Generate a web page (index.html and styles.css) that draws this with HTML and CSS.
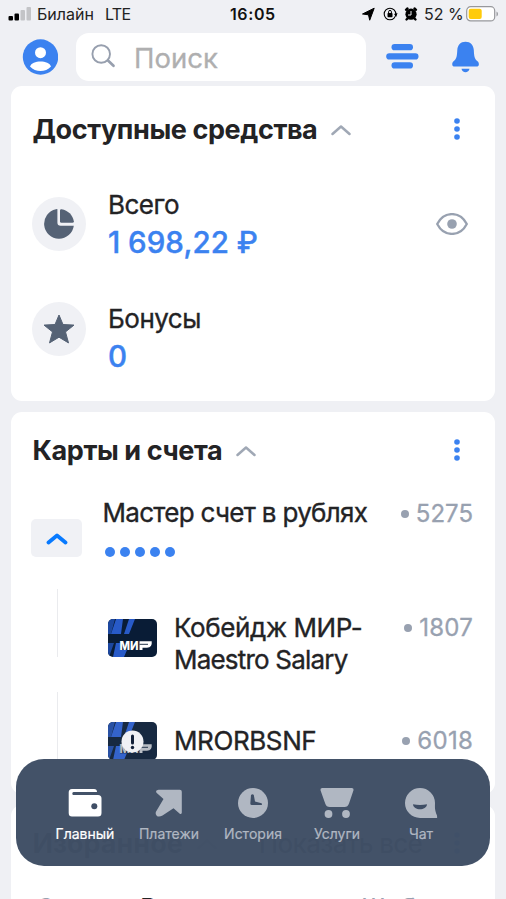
FILE: index.html
```html
<!DOCTYPE html>
<html lang="ru">
<head>
<meta charset="utf-8">
<meta name="viewport" content="width=device-width">
<title>Главный</title>
<link rel="stylesheet" href="styles.css">
</head>
<body>
<div class="screen">
  <div class="status">
    <svg class="signal" width="24" height="16" viewBox="0 0 24 16"><rect x=".5" y="10" width="4.500" height="4.500" rx="1"/><rect x="6.500" y="7.500" width="4.500" height="7" rx="1"/><g fill="#c3c4c7"><rect x="12.500" y="4" width="4.500" height="10.500" rx="1"/><rect x="18.500" y="1" width="4.500" height="13.500" rx="1"/></g></svg>
    <span class="carrier">Билайн</span>
    <span class="network">LTE</span>
    <span class="clock">16:05</span>
    <svg class="status-icons" width="56" height="16" viewBox="0 0 56 16"><path d="M12.200 2.200 7.700 14.200 6.500 8.800.5 8Z" stroke="#000" stroke-linejoin="round"/><circle cx="28" cy="8" r="5.800" fill="none" stroke="#000" stroke-width="1.100"/><path d="m32 8 2.300 2.800L35.500 7z"/><rect x="25.500" y="7" width="5" height="4.200" rx=".7"/><path d="M26.600 7.400V5.800a1.400 1.400 0 0 1 2.800 0v1.600" fill="none" stroke="#000"/><circle cx="49" cy="8.200" r="5.600"/><path d="m44 3.800 1.500-1.300M54 3.800l-1.500-1.300M45.500 12.500l-1 1M52.500 12.500l1 1" stroke="#000" stroke-width="2.400" stroke-linecap="round"/><path d="M49 5v4h-3" fill="none" stroke="#eff0f4"/></svg>
    <span class="percent">52 %</span>
    <svg class="battery" width="34" height="16" viewBox="0 0 34 16"><rect x=".7" y=".7" width="28" height="14.200" rx="4" fill="#fff" stroke="#97989c" stroke-width="1.200"/><rect x="2.700" y="2.800" width="13" height="10.200" rx="2" fill="#ffcb0a"/><path d="M30.500 5.500c2 1 2 4 0 5z" fill="#97989c"/></svg>
  </div>

  <header class="top">
    <svg class="avatar" width="36" height="36" viewBox="0 0 36 36"><circle cx="18.500" cy="18" r="17.700" fill="#3b82f0"/><circle cx="18.500" cy="13.700" r="5.500" fill="#fff"/><path d="M8 27.500C10 20.700 27 20.700 29 27.500 23.500 33.500 13.500 33.500 8 27.500Z" fill="#fff"/></svg>
    <div class="search">
      <svg width="25" height="25" viewBox="0 0 25 25" fill="none" stroke="#979fae" stroke-linecap="round"><circle cx="10.200" cy="10" r="8.800" stroke-width="1.900"/><path d="m17 16.500 5.500 5.200" stroke-width="2.700"/></svg>
      <span>Поиск</span>
    </div>
    <svg class="menu" width="33" height="25" viewBox="0 0 33 25" fill="#3b82f0"><rect x="5.500" width="21.500" height="6.300" rx="3.100"/><rect x=".2" y="9.200" width="32.300" height="6.300" rx="3.100"/><rect x="5.500" y="18.300" width="21.500" height="6.300" rx="3.100"/></svg>
    <svg class="bell" width="28" height="32" viewBox="0 0 28 32" fill="#3b82f0"><path d="M13.500.8C8.500.8 5.600 4.200 5.300 9 5 14.500 4.800 18 1.300 20.500-.2 21.700-.2 25.500 1.800 25.500h23.500c2 0 2-3.800.5-5C22.300 18 22.100 14.500 21.800 9 21.500 4.200 18.500.8 13.500.8ZM9.500 27.800h8c-.5 4.500-7.500 4.500-8 0Z"/></svg>
  </header>

  <main>
    <section class="card funds">
      <div class="heading"><h2 class="h-funds">Доступные средства</h2>
        <svg class="chev" width="20" height="12" viewBox="0 0 20 12"><path d="m1.500 10 8.500-7.500 8.500 7.500"/></svg>
        <svg class="dots" width="6" height="22" viewBox="0 0 6 22"><circle cx="3" cy="3" r="2.800"/><circle cx="3" cy="11" r="2.800"/><circle cx="3" cy="19" r="2.800"/></svg>
      </div>
      <div class="fund">
        <div class="disc"><svg width="32" height="32" viewBox="0 0 32 32" fill="#556275"><path d="M14.400 1.200V14.500Q14.400 17.700 17.700 17.700H30.800A14.900 14.900 0 1 1 12.900 1.200Q14.400 1 14.400 1.200Z"/><path d="M17 2.400Q17 1 18.600 1.200C25 2.300 29.800 7 30.800 13.200Q31 14.800 29.300 14.800H18.400Q17 14.800 17 13.400Z"/></svg></div>
        <div class="fund-text total"><div class="label">Всего</div><div class="amount">1 698,22 ₽</div></div>
        <svg class="eye" width="32" height="22" viewBox="0 0 32 22"><path d="M1.200 11C8-2.200 24-2.200 30.800 11 24 24.200 8 24.200 1.200 11Z" fill="none" stroke="#98a1b0" stroke-width="2.300" stroke-linejoin="round"/><circle cx="16" cy="11" r="4.800" fill="#98a1b0"/></svg>
      </div>
      <div class="fund">
        <div class="disc"><svg width="32" height="32" viewBox="0 0 32 32"><path d="m16 2 4 9.500 11 .6-8.500 6.800 3 11L16 24.200l-9.500 5.700 3-11-8.500-6.800 11-.6Z" fill="#556275" stroke="#556275" stroke-linejoin="round"/></svg></div>
        <div class="fund-text bonus"><div class="label">Бонусы</div><div class="amount">0</div></div>
      </div>
    </section>

    <section class="card accounts">
      <div class="heading"><h2 class="h-cards">Карты и счета</h2>
        <svg class="chev" width="20" height="12" viewBox="0 0 20 12"><path d="m1.500 10 8.500-7.500 8.500 7.500"/></svg>
        <svg class="dots" width="6" height="22" viewBox="0 0 6 22"><circle cx="3" cy="3" r="2.800"/><circle cx="3" cy="11" r="2.800"/><circle cx="3" cy="19" r="2.800"/></svg>
      </div>
      <div class="account">
        <div class="toggle"><svg width="22" height="13" viewBox="0 0 22 13"><path d="m2.500 10.500 8.500-7 8.500 7" fill="none" stroke="#087aff" stroke-width="3.800" stroke-linecap="round" stroke-linejoin="round"/></svg></div>
        <div class="account-text"><div class="label l-master">Мастер счет в рублях</div><div class="mask"><i></i><i></i><i></i><i></i><i></i></div></div>
        <div class="number"><i></i><span>5275</span></div>
      </div>
      <div class="bankcard">
        <div class="branch"></div>
        <svg class="plastic" width="49" height="38" viewBox="0 0 49 38"><use href="#mir"/></svg>
        <div class="label name"><div class="l-cob">Кобейдж МИР-</div><div class="l-mae">Maestro Salary</div></div>
        <div class="number n-wide"><i></i><span>1807</span></div>
      </div>
      <div class="bankcard second">
        <div class="branch"></div>
        <svg class="plastic" width="49" height="38" viewBox="0 0 49 38"><use href="#mir"/><rect width="49" height="38" rx="5" fill="#fff" opacity=".06"/><path d="M12 22h32v10H12z" fill="#14233f" opacity=".3"/><circle cx="24.500" cy="19.500" r="11" fill="#f0f1f5"/><path d="M24.500 14v7" stroke="#122039" stroke-width="3" stroke-linecap="round"/><circle cx="24.500" cy="25.500" r="1.700" fill="#122039"/></svg>
        <div class="label name"><div class="l-mro">MRORBSNF</div></div>
        <div class="number n-wide"><i></i><span>6018</span></div>
      </div>
    </section>

    <section class="card favorites">
      <div class="heading"><h2 class="h-fav">Избранное</h2>
        <svg class="chev" width="20" height="12" viewBox="0 0 20 12"><path d="m1.500 10 8.500-7.500 8.500 7.500"/></svg>
        <span class="all">Показать все</span>
        <svg class="dots" width="6" height="22" viewBox="0 0 6 22"><circle cx="3" cy="3" r="2.800"/><circle cx="3" cy="11" r="2.800"/><circle cx="3" cy="19" r="2.800"/></svg>
      </div>
      <div class="fav-row"><span class="muted">С</span><span>В</span><span class="muted">Шаб</span></div>
    </section>
  </main>

  <nav class="tabs">
    <a class="tab active"><svg width="34" height="32" viewBox="0 0 34 32"><path d="M4 2H26q3 0 3 3H5.500q-1.200 0-1.200 1.500T5.500 8H30q3.500 0 3.500 3.500V26q0 3.500-3.500 3.500H4Q.7 29.500.7 26V5.500Q.7 2 4 2Z"/><circle cx="26.300" cy="19.300" r="3" class="hole"/></svg><span>Главный</span></a>
    <a class="tab"><svg width="34" height="32" viewBox="0 0 34 32"><path d="M6.500 2.800H27.800q2 0 2 2v21q-.6 2-2.300.6l-6-5.200-11 7.300q-4 2.200-6-.1-1.800-2.200.2-4.800L11.500 12 4.500 5.800q-1.500-2.400 2-3Z"/></svg><span>Платежи</span></a>
    <a class="tab"><svg width="34" height="32" viewBox="0 0 34 32"><circle cx="17" cy="16" r="15"/><path d="M15 8q1.600-1.300 2.800 0l1.200 6.500 6.500 1.700q1 1 0 1.800H15.800q-1.500 0-1.500-1.500Z" class="hole"/></svg><span>История</span></a>
    <a class="tab"><svg width="34" height="32" viewBox="0 0 34 32"><path d="M2 1H32q2 .3 1.500 2.300L29 16.500q-1.200 3.500-4.500 3.500H9.800q-3.500 0-4.600-3.500L.5 3.300Q0 1.300 2 1Z"/><circle cx="8.500" cy="27" r="3.900"/><circle cx="26" cy="27" r="3.900"/></svg><span>Услуги</span></a>
    <a class="tab"><svg width="34" height="32" viewBox="0 0 34 32"><path d="M16 1A15 15 0 0 1 31 16c0 4-.5 6.500 2 12.500l.2 2Q33 31 32.200 31H16A15 15 0 0 1 16 1Z"/><path d="M9 17.300q7 1.500 14 0c-.5 6.700-13.500 6.700-14 0Z" class="hole"/></svg><span>Чат</span></a>
  </nav>
</div>
<svg width="0" height="0" class="defs"><defs>
  <clipPath id="round"><rect width="49" height="38" rx="5"/></clipPath>
  <g id="mir" clip-path="url(#round)"><rect width="49" height="38" fill="#091c36"/><path d="M0 0h7L3 15H0ZM0 24h6L1 38H0Z" fill="#1c479f"/><path d="M8 0h7l-2 15H3ZM21 0h6l-6 15h-5ZM8 24h4v7h7l-3 7H5Z" fill="#285ac8"/><text x="11.500" y="31" textLength="19" lengthAdjust="spacingAndGlyphs" class="mir-text">МИ</text><path d="M31.500 22.300H43.700q.8 6.400-4.700 6.400H34.500V31h-3Z" fill="#fff"/><path d="M31.500 25.300h8.500" stroke="#091c36" stroke-width=".9"/></g>
</defs></svg>
</body>
</html>
```
FILE: styles.css
```css
* { box-sizing: border-box; }
body { margin: 0; background: #eff0f4; font-family: Inter, "Liberation Sans", sans-serif; color: #232325; }
svg { display: block; flex: none; }
.screen { position: relative; width: 506px; height: 899px; overflow: hidden; }
.status { display: flex; align-items: center; height: 28px; padding-left: 8px; font-size: 16px; color: #222; white-space: nowrap; }
.signal { margin: -1px 5px 0 0; }
.carrier { width: 68px; }
.network { width: 125px; letter-spacing: -.7px; }
.clock { width: 132px; font-weight: 600; color: #111; letter-spacing: .6px; }
.percent { margin-left: 6px; width: 42px; }
.battery { margin-top: -1px; }
.top { display: flex; align-items: center; height: 57px; margin-bottom: 1px; padding-left: 22px; }
.search { display: flex; align-items: center; width: 290px; height: 48px; margin-left: 18px; padding-left: 15px; border-radius: 13px; background: #fff; color: #afafb0; font-size: 27.5px; }
.search span { margin: 2px 0 0 18px; -webkit-text-stroke: .3px; }
.menu { margin-left: 20px; }
.bell { margin-left: 33px; }
main { display: flex; flex-direction: column; gap: 11px; padding: 0 11px; }
.card { flex: none; width: 484px; border-radius: 11px; background: #fff; padding: 0 22px; }
.funds { height: 315px; }
.accounts { height: 382px; }
.favorites { height: 150px; }
.heading { display: flex; align-items: center; height: 86px; padding-right: 13px; white-space: nowrap; }
.accounts .heading, .favorites .heading { height: 75px; margin-bottom: 10px; }
.heading .dots { margin-left: auto; fill: #3b82f0; }
h2 { margin: 2px 14px 0 -.5px; font-size: 27px; font-weight: 700; line-height: 32px; letter-spacing: -.4px; }
.h-fav { letter-spacing: 0; }
.chev { margin-top: 2px; }
.chev path { fill: none; stroke: #a0a8b5; stroke-width: 2.5; stroke-linecap: round; stroke-linejoin: round; }
.fund { display: flex; align-items: center; height: 104px; }
.fund + .fund { height: 106px; }
.disc { display: flex; align-items: center; justify-content: center; width: 54px; height: 54px; margin-left: -1px; border-radius: 50%; background: #f0f1f5; }
.fund-text { margin-left: 22px; }
.total { margin-top: 5px; }
.bonus { margin-top: 22px; }
.label { font-size: 26px; line-height: 32px; letter-spacing: -.5px; -webkit-text-stroke: .35px; white-space: nowrap; }
.amount { font-size: 29.5px; font-weight: 500; line-height: 43px; color: #3b82f0; letter-spacing: .15px; word-spacing: -.5px; -webkit-text-stroke: .4px; white-space: nowrap; }
.eye { margin: 0 5px 0 auto; }
.account { display: flex; height: 92px; }
.toggle { display: flex; align-items: center; justify-content: center; width: 51px; height: 38px; margin: 22px 20.5px 0 -2px; border-radius: 5px; background: #f0f1f5; }
.l-master { letter-spacing: -.7px; }
.mask { display: flex; gap: 5px; margin: 18px 0 0 2.5px; }
.mask i { width: 10px; height: 10px; border-radius: 50%; background: #3b82f0; }
.number { display: flex; align-items: center; gap: 7px; height: 32px; margin-left: auto; color: #98a1b0; font-size: 24px; -webkit-text-stroke: .3px; }
.n-wide { letter-spacing: .25px; }
.number i { width: 8px; height: 8px; margin-top: 1px; border-radius: 50%; background: #98a1b0; }
.bankcard { display: flex; height: 103px; }
.branch { width: 1px; height: 68px; margin: 0 51px 0 24px; background: #eaebee; }
.plastic { margin: 30px 17px 0 -1px; }
.bankcard .name { margin-top: 23px; }
.bankcard .number { margin-top: 22px; }
.second .name { margin-top: 33px; }
.second .number { margin-top: 32px; }
.l-cob { letter-spacing: -.4px; }
.l-mae { letter-spacing: -.8px; }
.l-mro { letter-spacing: -.4px; }
.mir-text { font: 800 12px Inter, sans-serif; fill: #fff; }
.all { margin: 2px 0 0 42px; font-size: 26px; font-weight: 500; letter-spacing: -.7px; }
.fav-row { display: grid; grid-template-columns: 104px 221px 1fr; padding: 2px 0 0 3px; font-size: 26px; line-height: 32px; }
.muted { color: #98a1b0; }
.tabs { position: absolute; left: 16px; top: 759px; display: flex; width: 474px; height: 107px; padding: 28px 27px 0; border-radius: 28px; background: rgba(64,79,102,.985); }
.tab { display: flex; flex-direction: column; align-items: center; gap: 6px; width: 84px; font-size: 14px; line-height: 18px; -webkit-text-stroke: .2px; color: #b0b7c2; fill: #b0b7c2; }
.active { color: #fff; fill: #fff; }
.hole { fill: #3f4e65; }
.defs { position: absolute; }
```
